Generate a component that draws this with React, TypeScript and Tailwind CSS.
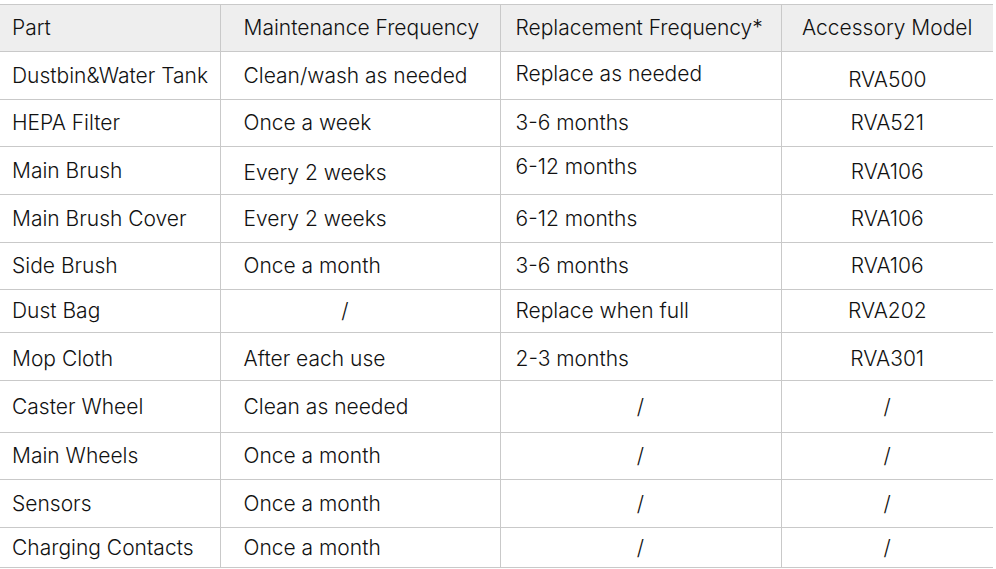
const rows: { h: number; cells: string[]; shift?: number[] }[] = [
  { h: 48, cells: ["Dustbin&Water Tank", "Clean/wash as needed", "Replace as needed", "RVA500"], shift: [0, 0, -2, 4] },
  { h: 47, cells: ["HEPA Filter", "Once a week", "3-6 months", "RVA521"] },
  { h: 48, cells: ["Main Brush", "Every 2 weeks", "6-12 months", "RVA106"], shift: [0, 2, -4, 1] },
  { h: 48, cells: ["Main Brush Cover", "Every 2 weeks", "6-12 months", "RVA106"] },
  { h: 47, cells: ["Side Brush", "Once a month", "3-6 months", "RVA106"] },
  { h: 43, cells: ["Dust Bag", "/", "Replace when full", "RVA202"] },
  { h: 48, cells: ["Mop Cloth", "After each use", "2-3 months", "RVA301"], shift: [2, 2, 2, 2] },
  { h: 52, cells: ["Caster Wheel", "Clean as needed", "/", "/"] },
  { h: 47, cells: ["Main Wheels", "Once a month", "/", "/"] },
  { h: 48, cells: ["Sensors", "Once a month", "/", "/"] },
  { h: 40, cells: ["Charging Contacts", "Once a month", "/", "/"] },
];

function Cell({ text, col, shift = 0 }: { text: string; col: number; shift?: number }) {
  const slash = text === "/";
  let cls = "";
  if (col === 0) cls = "pl-3 text-left";
  else if (col === 1) cls = slash ? "pr-[30px] text-center" : "pl-[23px] text-left";
  else if (col === 2) cls = slash ? "text-center" : "pl-[15px] text-left";
  else cls = "text-center";
  return (
    <td className={`p-0 align-middle ${col > 0 ? "border-l border-[#c9c9c9]" : ""} ${cls}`}>
      <span className="relative block" style={{ top: shift }}>
        {text}
      </span>
    </td>
  );
}

export default function App() {
  return (
    <div className="w-[996px] h-[569px] bg-white pt-1 overflow-hidden font-['Inter',sans-serif] font-light text-[21px] text-[#111111]">
      <table className="w-[993px] border-collapse table-fixed">
        <colgroup>
          <col className="w-[220px]" />
          <col className="w-[280px]" />
          <col className="w-[281px]" />
          <col className="w-[212px]" />
        </colgroup>
        <thead>
          <tr className="h-[47px] bg-[#eeeeee] border-t border-b border-[#c9c9c9]">
            <th className="p-0 pl-3 text-left font-light">Part</th>
            <th className="p-0 pl-[23px] text-left font-light border-l border-[#c9c9c9]">Maintenance Frequency</th>
            <th className="p-0 pl-[15px] text-left font-light border-l border-[#c9c9c9]">Replacement Frequency*</th>
            <th className="p-0 text-center font-light border-l border-[#c9c9c9]">Accessory Model</th>
          </tr>
        </thead>
        <tbody>
          {rows.map((r, i) => (
            <tr key={i} className="border-b border-[#c9c9c9]" style={{ height: r.h }}>
              {r.cells.map((c, j) => (
                <Cell key={j} text={c} col={j} shift={r.shift ? r.shift[j] : 0} />
              ))}
            </tr>
          ))}
        </tbody>
      </table>
    </div>
  );
}
